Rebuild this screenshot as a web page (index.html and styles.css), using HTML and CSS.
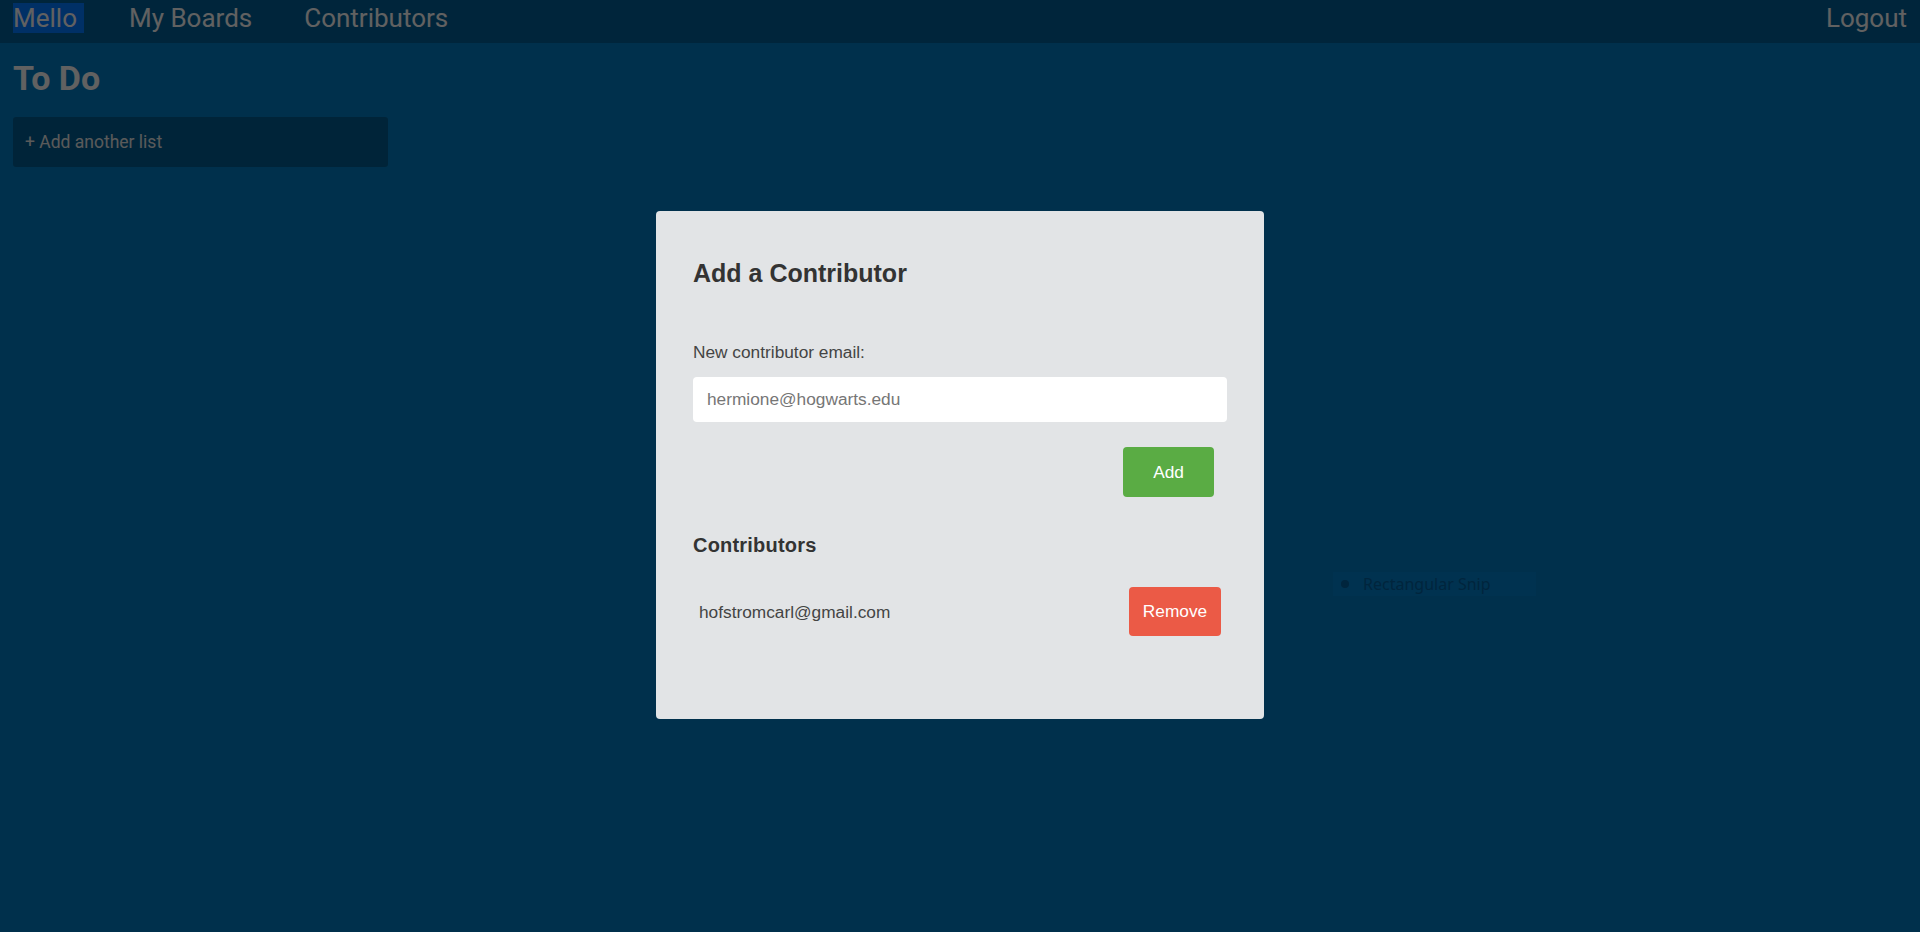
FILE: index.html
```html
<!DOCTYPE html>
<html lang="en">
<head>
<meta charset="utf-8">
<title>Mello</title>
<link rel="stylesheet" href="styles.css">
</head>
<body>
<div class="app">
  <nav class="topnav">
    <div class="nav-left">
      <a class="nav-link" href="#"><span class="sel">Mello</span></a>
      <a class="nav-link" href="#">My Boards</a>
      <a class="nav-link" href="#">Contributors</a>
    </div>
    <a class="nav-link" href="#">Logout</a>
  </nav>
  <main class="board">
    <h1 class="board-title">To Do</h1>
    <div class="lists">
      <button class="add-list" type="button">+ Add another list</button>
    </div>
  </main>
</div>

<div class="overlay">
  <div class="modal">
    <h2 class="modal-title">Add a Contributor</h2>
    <label class="field-label" for="email">New contributor email:</label>
    <input class="field-input" id="email" type="email" placeholder="hermione@hogwarts.edu">
    <div class="actions">
      <button class="btn btn-add" type="button">Add</button>
    </div>
    <h3 class="section-title">Contributors</h3>
    <div class="contrib-row">
      <span class="contrib-email">hofstromcarl@gmail.com</span>
      <button class="btn btn-remove" type="button">Remove</button>
    </div>
  </div>
</div>

<div class="snip">
  <span class="snip-dot"></span>
  <span class="snip-text">Rectangular Snip</span>
</div>
</body>
</html>
```

FILE: styles.css
```css
html, body {
  margin: 0;
  padding: 0;
  height: 100%;
}

body {
  background: #0079bf;
  font-family: Roboto, "Liberation Sans", sans-serif;
  overflow: hidden;
}

.app {
  min-height: 100%;
}

.topnav {
  height: 43px;
  box-sizing: border-box;
  padding: 3px 13px 0;
  background: rgba(0, 0, 0, 0.22);
  display: flex;
  justify-content: space-between;
  align-items: flex-start;
}

.nav-left {
  display: flex;
  gap: 52px;
}

.nav-link {
  color: #f2f2f2;
  font-size: 26px;
  line-height: normal;
  text-decoration: none;
}

.sel {
  background: rgb(0, 120, 255);
  padding-right: 7px;
  margin-right: -7px;
}

.board {
  padding: 0 13px;
}

.board-title {
  margin: 15px 0 0;
  font-size: 34px;
  line-height: 40px;
  font-weight: 700;
  color: #f2f2f2;
}

.lists {
  margin-top: 19px;
  display: flex;
}

.add-list {
  width: 375px;
  height: 50px;
  padding: 0 12px;
  border: none;
  border-radius: 3px;
  background: rgba(0, 0, 0, 0.25);
  color: #e2e2e2;
  font-family: Roboto, sans-serif;
  font-size: 17.5px;
  text-align: left;
}

.overlay {
  position: fixed;
  inset: 0;
  background: rgba(0, 0, 0, 0.6);
  display: flex;
  align-items: center;
  justify-content: center;
}

.modal {
  width: 608px;
  box-sizing: border-box;
  padding: 48px 37px 83px;
  margin-bottom: 2px;
  background: #e2e4e6;
  border-radius: 4px;
  font-family: "Liberation Sans", Arial, sans-serif;
  font-size: 17.3px;
  color: #444;
}

.modal-title {
  margin: 0;
  font-size: 25px;
  line-height: 29px;
  font-weight: 700;
  color: #333;
}

.field-label {
  display: block;
  margin-top: 54px;
  line-height: 20px;
  color: #444;
}

.field-input {
  display: block;
  width: 100%;
  height: 45px;
  box-sizing: border-box;
  margin-top: 15px;
  padding: 0 14px;
  border: none;
  border-radius: 4px;
  background: #fff;
  font-family: "Liberation Sans", Arial, sans-serif;
  font-size: 17.3px;
  color: #333;
  outline: none;
}

.field-input::placeholder {
  color: #767676;
}

.actions {
  display: flex;
  justify-content: flex-end;
  margin-top: 25px;
  padding-right: 13px;
}

.btn {
  border: none;
  border-radius: 4px;
  color: #fff;
  font-family: "Liberation Sans", Arial, sans-serif;
  font-size: 17.3px;
  padding: 0;
}

.btn-add {
  width: 91px;
  height: 50px;
  background: #5aac44;
}

.section-title {
  margin: 37px 0 0;
  font-size: 20px;
  line-height: 23px;
  font-weight: 700;
  letter-spacing: 0.2px;
  color: #333;
}

.contrib-row {
  margin-top: 30px;
  padding: 0 6px;
  display: flex;
  justify-content: space-between;
  align-items: center;
}

.contrib-email {
  color: #444;
  line-height: 20px;
}

.btn-remove {
  width: 92px;
  height: 49px;
  background: #eb5a46;
}

.snip {
  position: absolute;
  left: 1333px;
  top: 572px;
  width: 203px;
  height: 24px;
  background: #003250;
  display: flex;
  align-items: center;
  gap: 14px;
  padding-left: 8px;
  box-sizing: border-box;
}

.snip-dot {
  width: 8px;
  height: 8px;
  border-radius: 50%;
  background: #00253d;
}

.snip-text {
  font-family: "Noto Sans", sans-serif;
  font-size: 16px;
  color: #00253d;
}
```
